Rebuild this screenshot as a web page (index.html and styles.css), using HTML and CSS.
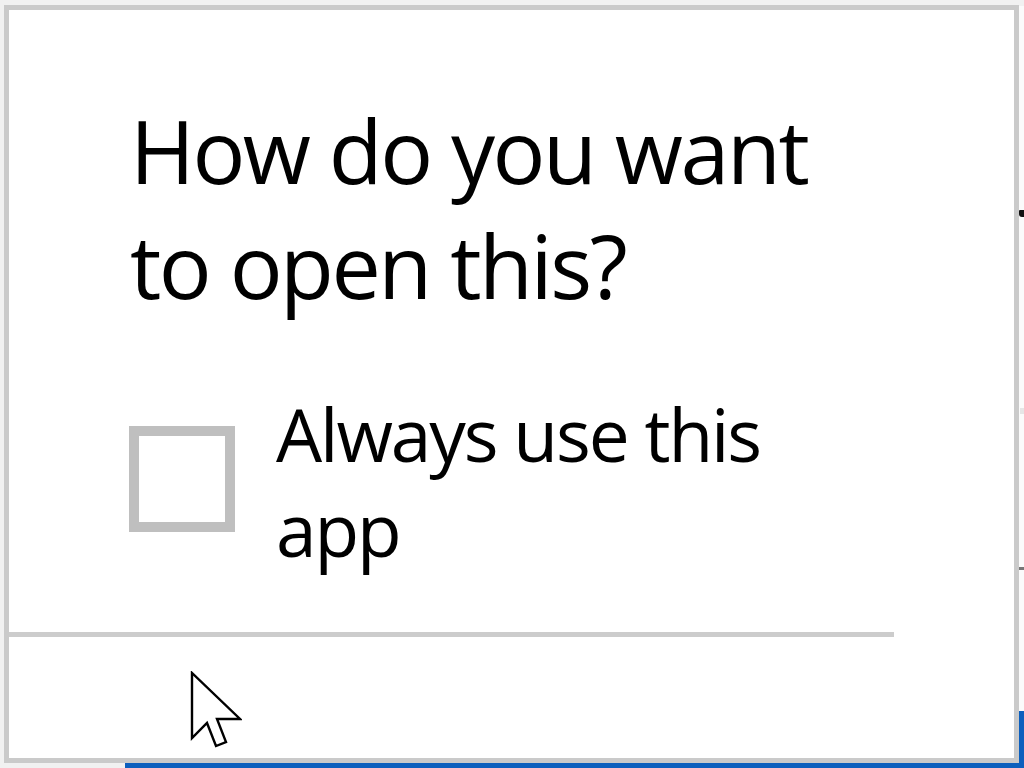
FILE: index.html
```html
<!DOCTYPE html>
<html lang="en">
<head>
<meta charset="utf-8">
<title>How do you want to open this?</title>
<link rel="stylesheet" href="styles.css">
</head>
<body>
  <div class="bg-window bg-white">
    <span class="mark mark-glyph"></span>
    <span class="mark mark-light"></span>
    <span class="mark mark-dash"></span>
  </div>
  <div class="bg-window bg-blue"></div>

  <div class="dialog">
    <div class="dialog-body">
      <h1 class="title">How do you want to open this?</h1>
      <label class="check-row">
        <span class="checkbox"></span>
        <span class="check-label">Always use this app</span>
      </label>
    </div>
    <div class="divider"></div>
    <div class="dialog-foot"></div>
  </div>

  <svg class="cursor" width="52" height="78" viewBox="-2 -2 52 78" aria-hidden="true">
    <path d="M0 0 L0 65 L15 50 L24 73 L34 69 L25 46 L48 46 Z" fill="#fff" stroke="#000" stroke-width="2.4" stroke-linejoin="miter"/>
  </svg>
</body>
</html>
```

FILE: styles.css
```css
html, body {
  margin: 0;
  padding: 0;
}

body {
  width: 1024px;
  height: 768px;
  overflow: hidden;
  position: relative;
  background: #f1f1f1;
  font-family: "Open Sans", "Noto Sans", "Liberation Sans", sans-serif;
  color: #000;
  padding: 5px 0 0 4px;
  box-sizing: border-box;
}

.bg-window {
  position: absolute;
}

.bg-white {
  left: 900px;
  top: 6px;
  right: 0;
  bottom: 0;
  background: #fbfbfb;
}

.bg-blue {
  left: 125px;
  top: 711px;
  right: 0;
  bottom: 0;
  background: #0c5fbd;
}

.mark {
  position: absolute;
  display: block;
}

.mark-glyph {
  left: 119px;
  top: 204px;
  width: 5px;
  height: 7px;
  background: #111;
  border-radius: 1px 0 0 3px;
}

.mark-light {
  left: 120px;
  top: 402px;
  width: 4px;
  height: 6px;
  background: #e6e6e6;
}

.mark-dash {
  left: 119px;
  top: 561px;
  width: 5px;
  height: 3px;
  background: #777;
}

.dialog {
  position: relative;
  z-index: 1;
  width: 1015px;
  height: 758px;
  box-sizing: border-box;
  border: 5px solid #cacaca;
  background: #fff;
  display: flex;
  flex-direction: column;
}

.dialog-body {
  height: 622px;
  box-sizing: border-box;
  padding: 83px 0 0 121px;
}

.title {
  margin: 0;
  width: 740px;
  font-size: 88px;
  line-height: 115px;
  font-weight: 400;
  letter-spacing: -2.5px;
}

.check-row {
  display: flex;
  align-items: flex-start;
  margin: 63px 0 0 -6px;
}

.checkbox {
  flex: none;
  width: 106px;
  height: 106px;
  box-sizing: border-box;
  border: 10px solid #bfbfbf;
  margin: 40px 0 0 5px;
}

.check-label {
  width: 560px;
  margin-left: 41px;
  font-size: 73px;
  line-height: 95px;
  letter-spacing: -2.1px;
}

.divider {
  flex: none;
  width: 885px;
  height: 5px;
  background: #cccccc;
}

.dialog-foot {
  flex: 1;
}

.cursor {
  position: absolute;
  left: 190px;
  top: 671px;
  z-index: 2;
}
```
